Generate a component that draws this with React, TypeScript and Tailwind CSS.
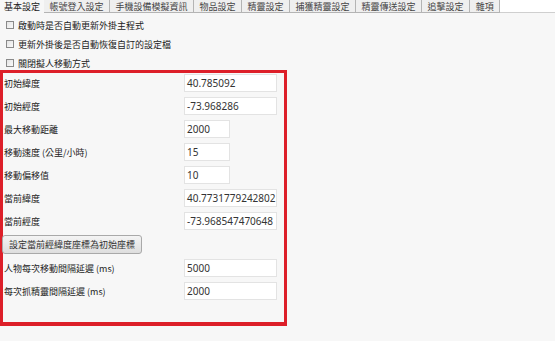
import React from "react";

const tabs = ["基本設定", "帳號登入設定", "手機設備模擬資訊", "物品設定", "精靈設定", "捕獲精靈設定", "精靈傳送設定", "追擊設定", "雜項"];

const checks = ["啟動時是否自動更新外掛主程式", "更新外掛後是否自動恢復自訂的設定檔", "關閉擬人移動方式"];

const rows = [
    { label: "初始緯度", value: "40.785092", wide: true },
    { label: "初始經度", value: "-73.968286", wide: true },
    { label: "最大移動距離", value: "2000", wide: false },
    { label: "移動速度 (公里/小時)", value: "15", wide: false },
    { label: "移動偏移值", value: "10", wide: false },
    { label: "當前緯度", value: "40.7731779242802", wide: true },
    { label: "當前經度", value: "-73.968547470648", wide: true },
];

const delays = [
    { label: "人物每次移動間隔延遲 (ms)", value: "5000" },
    { label: "每次抓精靈間隔延遲 (ms)", value: "2000" },
];

function Field({ label, value, wide }: { label: string; value: string; wide: boolean }) {
    return (
        <div className="flex items-center h-[18px]">
            <span className="w-[180px] shrink-0">{label}</span>
            <div className={`${wide ? "w-[93px]" : "w-[46px]"} h-[18px] bg-white border border-[#e3e3e3] flex items-center pl-[2px] text-[10px] text-[#333] font-['Noto_Sans','Noto_Sans_CJK_TC',sans-serif] overflow-hidden whitespace-nowrap`}>
                {value}
            </div>
        </div>
    );
}

export default function App() {
    return (
        <div className="w-[555px] h-[341px] bg-[#f7f7f7] overflow-hidden text-[9px] text-[#222] font-['Noto_Sans_CJK_TC','Noto_Sans',sans-serif] leading-none">
            <div className="flex h-[13px] bg-white">
                {tabs.map((t, i) => (
                    <div
                        key={t}
                        className={
                            i === 0
                                ? "h-[13px] px-[4px] flex items-center bg-[#f7f7f7]"
                                : "h-[13px] px-[5.5px] flex items-center bg-[#efefef] border-r border-b border-[#b4b4b4] text-[#444]"
                        }
                    >
                        {t}
                    </div>
                ))}
                <div className="flex-1 border-b border-[#cfcfcf]" />
            </div>

            <div className="flex flex-col gap-[11px] pt-[8px] pl-[6px]">
                {checks.map((c) => (
                    <div key={c} className="flex items-center gap-[4px] h-[8px]">
                        <span className="w-[8px] h-[8px] border border-[#8a8a8a] bg-gradient-to-br from-[#e4e4e4] to-[#fafafa]" />
                        <span>{c}</span>
                    </div>
                ))}
            </div>

            <div className="mt-[3px] w-[287px] h-[256px] border-[3px] border-b-4 border-[#dd1f29] pl-[1px] pt-[1px] flex flex-col gap-[5px]">
                {rows.map((r) => (
                    <Field key={r.label} {...r} />
                ))}
                <button className="w-[140px] h-[19px] -ml-[2px] rounded-[3px] border border-[#a9a9a9] bg-gradient-to-b from-[#f4f4f4] to-[#dedede] text-[9px] text-[#333] flex items-center justify-center">
                    設定當前經緯度座標為初始座標
                </button>
                {delays.map((d) => (
                    <Field key={d.label} label={d.label} value={d.value} wide />
                ))}
            </div>
        </div>
    );
}
